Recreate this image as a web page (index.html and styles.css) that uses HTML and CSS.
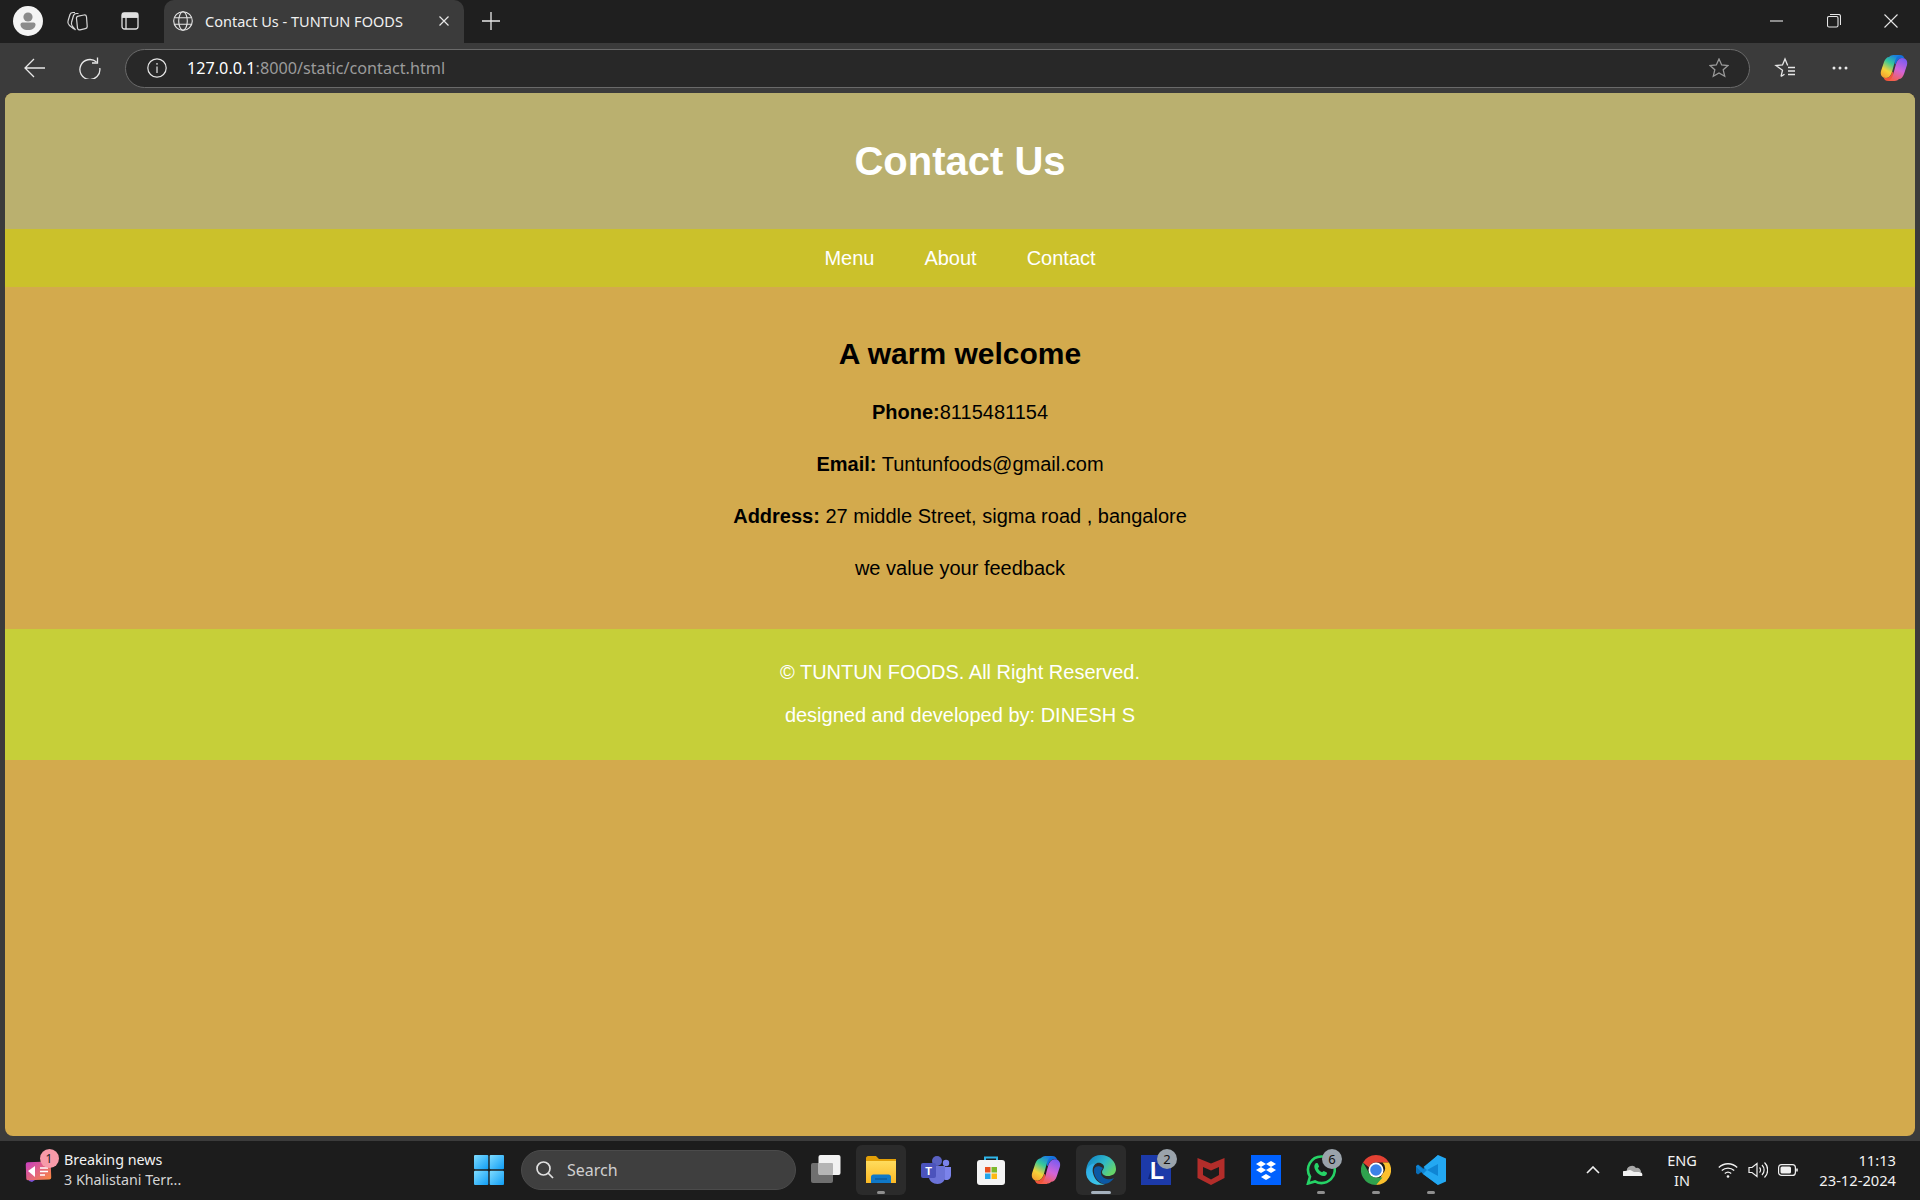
FILE: index.html
```html
<!DOCTYPE html>
<html lang="en">
<head>
<meta charset="utf-8">
<title>Contact Us - TUNTUN FOODS</title>
<link rel="stylesheet" href="styles.css">
</head>
<body>
<svg class="defs" aria-hidden="true">
  <defs>
    <linearGradient id="win" x1="0" y1="0" x2="1" y2="1"><stop offset="0" stop-color="#7fdcff"/><stop offset="1" stop-color="#0f9df5"/></linearGradient>
    <linearGradient id="copA" x1="0.7" y1="0" x2="0.2" y2="1"><stop offset="0" stop-color="#1b7fe0"/><stop offset=".35" stop-color="#35c99a"/><stop offset=".7" stop-color="#f5d33a"/><stop offset="1" stop-color="#f5a02e"/></linearGradient>
    <linearGradient id="copB" x1="0.7" y1="0" x2="0.3" y2="1"><stop offset="0" stop-color="#7b5cf0"/><stop offset=".5" stop-color="#d264d8"/><stop offset="1" stop-color="#f5604a"/></linearGradient>
    <linearGradient id="edgeA" x1="0" y1="0" x2="1" y2="0.6"><stop offset="0" stop-color="#0c7bc8"/><stop offset=".6" stop-color="#2fb8c8"/><stop offset="1" stop-color="#66d46a"/></linearGradient>
    <linearGradient id="edgeB" x1="0" y1="0" x2="0.6" y2="1"><stop offset="0" stop-color="#2aa4e6"/><stop offset="1" stop-color="#3cc7e8"/></linearGradient>
    <linearGradient id="folder" x1="0" y1="0" x2="0" y2="1"><stop offset="0" stop-color="#ffdc5e"/><stop offset="1" stop-color="#fcb924"/></linearGradient>
    <linearGradient id="news" x1="0" y1="0" x2="1" y2="1"><stop offset="0" stop-color="#c93ec2"/><stop offset="1" stop-color="#fb8a3c"/></linearGradient>
    <symbol id="copilot" viewBox="0 0 28 28">
      <path fill="#1670dc" d="M13 1h7c2.500 0 4 1.500 4.500 4-1-1-2-1-3-1-2.500 0-4.500 2.500-5.500 5.500l-1 1z"/>
      <path fill="#f0553a" d="M15 27H8c-2.500 0-4-1.500-4.500-4 1 1 2 1 3 1 2.500 0 4.500-2.500 5.500-5.500l1-1z"/>
      <path fill="url(#copA)" d="M9 3c2-2 4-2 6-2h5c-3 1-4 3-5 6l-3 11c-1 3-3 6-6 6-4 0-6-3-5-7l3-9c1-3 3-5 5-5z"/>
      <path fill="url(#copB)" d="M19 25c-2 2-4 2-6 2H8c3-1 4-3 5-6l3-11c1-3 3-6 6-6 4 0 6 3 5 7l-3 9c-1 3-3 5-5 5z"/>
    </symbol>
  </defs>
</svg>

<div class="screen">
  <div class="tabstrip">
    <div class="strip-btn first">
      <svg class="i30" viewBox="0 0 30 30"><circle cx="15" cy="15" r="15" fill="#f4f4f4"/><circle cx="15" cy="11" r="4.6" fill="#8b8b8b"/><path fill="#8b8b8b" d="M7.500 18.500c0-1.200 1-2 2-2h11c1 0 2 .8 2 2 0 3.500-3 5.500-7.500 5.500S7.500 22 7.500 18.500z"/></svg>
    </div>
    <div class="strip-btn">
      <svg class="i22" viewBox="0 0 22 22" fill="none" stroke="#d8d8d8" stroke-width="1.200"><path d="M8 19 3.500 15.500C2 14 1.500 12.500 2 11L4 4.500C4.500 3 5.500 2.500 7 2.500l2 0"/><path d="M9.500 20 6.500 16.500C5.500 15 5 14 5.500 12.500L7.500 5.500C8 4 9 3.500 10.500 3.500h2"/><path d="M10.500 8.500c-.2-1.200.6-2.200 1.800-2.400L18 5c1.200-.2 2.300.6 2.500 1.800l.7 9.500c.1 1.200-.7 2.200-1.900 2.400l-5.300 1.200c-1.200.2-2.300-.6-2.500-1.800z"/></svg>
    </div>
    <div class="strip-btn panel">
      <svg class="i20" viewBox="0 0 20 20" fill="none" stroke="#e0e0e0" stroke-width="1.300"><rect x="2" y="2" width="16" height="16" rx="2.500"/><path d="M6 6v12M2 6h16"/><path d="M2.500 2.500h15v3.500h-15z" fill="#e0e0e0"/></svg>
    </div>
    <div class="tab">
      <svg class="i20" viewBox="0 0 20 20" fill="none" stroke="#e6e6e6" stroke-width="1.100"><circle cx="10" cy="10" r="9.300"/><ellipse cx="10" cy="10" rx="4.300" ry="9.300"/><path d="M1.500 6.800h17M1.500 13.200h17"/></svg>
      <span class="tab-title">Contact Us - TUNTUN FOODS</span>
      <svg class="i10 tab-close" viewBox="0 0 10 10" fill="none" stroke="#e8e8e8" stroke-width="1.200"><path d="M.5.500l9 9M9.500.500l-9 9"/></svg>
    </div>
    <div class="strip-btn plus">
      <svg class="i18" viewBox="0 0 18 18" fill="none" stroke="#e8e8e8" stroke-width="1.300"><path d="M9 0v18M0 9h18"/></svg>
    </div>
    <div class="strip-space"></div>
    <div class="winctl"><svg class="i14" viewBox="0 0 14 14" fill="none" stroke="#e6e6e6" stroke-width="1.100"><path d="M0 7h13"/></svg></div>
    <div class="winctl"><svg class="i14" viewBox="0 0 14 14" fill="none" stroke="#e6e6e6" stroke-width="1.100"><rect x=".5" y="2.500" width="10.500" height="10.500" rx="1.500"/><path d="M3 .5h8.500c1 0 2 1 2 2V11"/></svg></div>
    <div class="winctl"><svg class="i14" viewBox="0 0 14 14" fill="none" stroke="#e6e6e6" stroke-width="1.100"><path d="M.5.500l13 13M13.500.500l-13 13"/></svg></div>
  </div>

  <div class="toolbar">
    <div class="tool-btn lead">
      <svg class="i22" viewBox="0 0 22 22" fill="none" stroke="#e8e8e8" stroke-width="1.300"><path d="M21 11H1M10 2l-9 9 9 9"/></svg>
    </div>
    <div class="tool-btn">
      <svg class="i22" viewBox="0 0 22 22" fill="none" stroke="#e8e8e8" stroke-width="1.300"><path d="M17.500 5A10 10 0 1 0 20.800 11"/><path d="M18.500 .5v5.500h-5.500"/></svg>
    </div>
    <div class="address">
      <svg class="i20" viewBox="0 0 20 20" fill="none" stroke="#e6e6e6" stroke-width="1.200"><circle cx="10" cy="10" r="9.200"/><path d="M10 8.500v6.500M10 5v1.800"/></svg>
      <span class="url"><span class="host">127.0.0.1</span>:8000/static/contact.html</span>
      <svg class="i20 addr-star" viewBox="0 0 20 20" fill="none" stroke="#9a9a9a" stroke-width="1.300"><path d="M10 1l2.700 6 6.300.6-4.800 4.200 1.500 6.400L10 14.900l-5.700 3.300 1.500-6.400L1 7.600 7.300 7z"/></svg>
    </div>
    <div class="tool-btn">
      <svg class="i22" viewBox="0 0 22 22" fill="none" stroke="#e8e8e8" stroke-width="1.300"><path d="M7 19.500l1.500-6.200L2 8.500l6.500-.6L11 2l2.700 6.500M7 19.500l3.500-2.200"/><path d="M14 10.500h7M14 14h7M14 17.500h7"/></svg>
    </div>
    <div class="tool-btn">
      <svg class="dots" viewBox="0 0 16 4" fill="#e8e8e8"><circle cx="2" cy="2" r="1.500"/><circle cx="8" cy="2" r="1.500"/><circle cx="14" cy="2" r="1.500"/></svg>
    </div>
    <div class="tool-btn last">
      <svg class="i28" viewBox="0 0 28 28"><use href="#copilot"/></svg>
    </div>
  </div>

  <div class="frame">
    <div class="page">
      <header class="site-header"><h1>Contact Us</h1></header>
      <nav class="site-nav">
        <a>Menu</a>
        <a>About</a>
        <a>Contact</a>
      </nav>
      <main class="site-main">
        <h2>A warm welcome</h2>
        <p><strong>Phone:</strong>8115481154</p>
        <p><strong>Email:</strong> Tuntunfoods@gmail.com</p>
        <p><strong>Address:</strong> 27 middle Street, sigma road , bangalore</p>
        <p>we value your feedback</p>
      </main>
      <footer class="site-footer">
        <p>© TUNTUN FOODS. All Right Reserved.</p>
        <p>designed and developed by: DINESH S</p>
      </footer>
    </div>
  </div>

  <div class="taskbar">
    <div class="news">
      <div class="news-icon">
        <svg class="i30" viewBox="0 0 30 30"><path fill="#3f6fd8" d="M7 13 22 5l2 8-15 8z"/><path fill="#7a4fe0" d="M3 15l18 3-12 8-3-1z"/><rect x="3" y="6" width="25" height="18" rx="2" fill="url(#news)" transform="rotate(-2 15 15)"/><path fill="#fff" d="M5 15l7-5v11z"/><path stroke="#fff" stroke-width="1.500" d="M17 12h8M17 15.500h8M17 19h5"/></svg>
        <span class="news-badge">1</span>
      </div>
      <div class="news-text"><span class="news-title">Breaking news</span><span class="news-sub">3 Khalistani Terr...</span></div>
    </div>

    <div class="apps">
      <div class="app start">
        <svg class="i30" viewBox="0 0 30 30" fill="url(#win)"><rect x="0" y="0" width="14.300" height="14.300" rx="1"/><rect x="15.700" y="0" width="14.300" height="14.300" rx="1"/><rect x="0" y="15.700" width="14.300" height="14.300" rx="1"/><rect x="15.700" y="15.700" width="14.300" height="14.300" rx="1"/></svg>
      </div>
      <div class="search">
        <svg class="i18" viewBox="0 0 18 18" fill="none" stroke="#e0e0e0" stroke-width="1.700"><circle cx="7.500" cy="7.500" r="6.500"/><path d="M12 12l5 5"/></svg>
        <span>Search</span>
      </div>
      <div class="app">
        <svg class="i30" viewBox="0 0 30 30"><rect x="0" y="8" width="22" height="20" rx="2" fill="#6f6f6f"/><rect x="7.500" y="0" width="22" height="20" rx="2" fill="#f2f2f2"/><rect x="7.500" y="8" width="14.500" height="12" rx="1" fill="#b5b5b5"/></svg>
      </div>
      <div class="app active">
        <svg class="i30" viewBox="0 0 30 30"><path fill="#e3a008" d="M0 3c0-1 1-2 2-2h8l3 3h17v6H0z"/><path fill="url(#folder)" d="M0 6h30v22H0z"/><path fill="#0f78c8" d="M5 22c0-1.500 1-2.500 2.500-2.500h15c1.500 0 2.500 1 2.500 2.500v6H5z"/><path stroke="#0a4f8a" stroke-width="1" d="M9 24h12"/></svg>
        <i class="pin"></i>
      </div>
      <div class="app">
        <svg class="i30" viewBox="0 0 30 30"><circle cx="16" cy="6" r="5" fill="#5a62c2"/><circle cx="25" cy="8" r="3.200" fill="#7b83eb"/><path fill="#7b83eb" d="M21 12h9v8c0 3-2 5-4.500 5S21 23 21 20z"/><path fill="#6b73d8" d="M8 11h16v11c0 4-3 7-7.500 7S8 26 8 22z"/><rect x="0" y="8" width="15" height="15" rx="2" fill="#4b53bc"/><text class="t-t" x="7.500" y="20" text-anchor="middle">T</text></svg>
      </div>
      <div class="app">
        <svg class="i30" viewBox="0 0 30 30"><path fill="none" stroke="#2fb6e9" stroke-width="2" d="M9 6V2.500h12V6"/><rect x="1" y="5" width="28" height="25" rx="3" fill="#f4f4f4"/><rect x="9" y="12" width="5.500" height="5.500" fill="#e8501f"/><rect x="15.500" y="12" width="5.500" height="5.500" fill="#7cb82a"/><rect x="9" y="18.500" width="5.500" height="5.500" fill="#22a5ea"/><rect x="15.500" y="18.500" width="5.500" height="5.500" fill="#fdb812"/></svg>
      </div>
      <div class="app">
        <svg class="i30" viewBox="0 0 28 28"><use href="#copilot"/></svg>
      </div>
      <div class="app active">
        <svg class="i30" viewBox="0 0 30 30"><path fill="url(#edgeA)" d="M15 0c9 0 15 7 15 14 0 5-4 7-8 7s-6-2-6-4 2-3 2-5c0-3-4-5-7-4C5 9 1 13 0 18 0 7 6 0 15 0z"/><path fill="url(#edgeB)" d="M0 17c1-6 6-9 11-9-4 2-5 6-4 10 1 6 7 12 12 11C10 32 0 27 0 17z"/><path fill="#0c59a4" d="M8 14c-1 6 3 13 10 15 4 0 8-3 10-6-4 2-9 2-12-2-2-3-1-6 1-8-4-3-8-2-9 1z"/></svg>
        <i class="pin wide"></i>
      </div>
      <div class="app">
        <svg class="i30" viewBox="0 0 30 30"><rect width="30" height="30" fill="#1c3aa9"/><path fill="#0f2579" d="M12 8h4l-5 16H7z"/><text class="t-l" x="16" y="24" text-anchor="middle">L</text></svg>
        <span class="app-badge">2</span>
      </div>
      <div class="app">
        <svg class="i30" viewBox="0 0 30 30"><path fill="#b32d2a" d="M1.500 3 15 8.500 28.500 3v20L15 30 1.500 23z"/><path fill="#1c1c1c" d="M7 12l8 3.500 8-3.500v8l-8 4.500L7 20z"/></svg>
      </div>
      <div class="app">
        <svg class="i30" viewBox="0 0 30 30"><rect width="30" height="30" fill="#0061fe"/><g fill="#fff"><path d="M10 6l5 3-5 3-5-3z"/><path d="M20 6l5 3-5 3-5-3z"/><path d="M10 12l5 3-5 3-5-3z"/><path d="M20 12l5 3-5 3-5-3z"/><path d="M15 19l5 3-5 3-5-3z"/></g></svg>
      </div>
      <div class="app">
        <svg class="i30" viewBox="0 0 30 30"><path fill="none" stroke="#25d366" stroke-width="2.600" d="M15.500 1.500a13.300 13.300 0 0 1 0 26.600c-2.300 0-4.500-.6-6.500-1.700L2 28.500l2-6.800A13.300 13.300 0 0 1 15.500 1.500z"/><path fill="#25d366" d="M10.500 8c1 0 1.300.3 1.600 1l1 2.500-1.200 1.800c.8 1.800 2.300 3.200 4.100 4l1.700-1.400 2.700 1.300c.6.300.7.800.5 1.500-.5 1.500-1.700 2.300-3.300 2.300-4.800-.6-8.800-4.700-9.300-9.300 0-1.800 1-3.700 2.200-3.700z"/></svg>
        <span class="app-badge">6</span>
        <i class="pin"></i>
      </div>
      <div class="app">
        <svg class="i30" viewBox="0 0 30 30"><path fill="#e34133" d="M15 0a15 15 0 0 1 13 7.500H15a7.500 7.500 0 0 0-7 5L2 7.500A15 15 0 0 1 15 0z"/><path fill="#fbc02d" d="M28 7.500A15 15 0 0 1 15 30l6.500-11A7.500 7.500 0 0 0 21.500 7.500z"/><path fill="#2fa24e" d="M2 7.500l6.500 11.300A7.500 7.500 0 0 0 15 22.500h6.500L15 30A15 15 0 0 1 2 7.500z"/><circle cx="15" cy="15" r="7.500" fill="#fff"/><circle cx="15" cy="15" r="5.800" fill="#3b82e8"/></svg>
        <i class="pin"></i>
      </div>
      <div class="app">
        <svg class="i30" viewBox="0 0 30 30"><path fill="#0a6fb8" d="M0 11l2-1.500 7 5-7 5L0 18z"/><path fill="#0f85d4" d="M22 0 7 14.500 2 10 0 11.500 7 19l.1.100L22 30z"/><path fill="#23a8f2" d="M22 0l8 3.500v23L22 30V9l-11 6-3.500-3z"/><path fill="#23a8f2" d="M22 21v9L7 19l4-4z"/></svg>
        <i class="pin"></i>
      </div>
    </div>

    <div class="tray">
      <div class="tray-cell wide">
        <svg class="chev" viewBox="0 0 14 8" fill="none" stroke="#f0f0f0" stroke-width="1.600"><path d="M1 7l6-6 6 6"/></svg>
      </div>
      <div class="tray-cell wide">
        <svg class="cloud" viewBox="0 0 20 12"><path fill="#a8a8a8" d="M4 8a5 5 0 0 1 9-4 4 4 0 0 1 5 4z"/><path fill="#f2f2f2" d="M1 12a2.500 2.500 0 0 1 1-5c2 0 3-1 5-1 2 .5 2.500 1.500 4 2h5c3 0 4 2.500 3 4z"/></svg>
      </div>
      <div class="lang"><span>ENG</span><span>IN</span></div>
      <div class="tray-cell">
        <svg class="i20" viewBox="0 0 20 20" fill="none" stroke="#f0f0f0" stroke-width="1.300"><path d="M.8 7.500c5-5 13.400-5 18.400 0M3.800 10.500c3.500-3.300 8.900-3.300 12.400 0M6.800 13.500c1.800-1.600 4.600-1.600 6.400 0"/><circle cx="10" cy="16.500" r="1.300" fill="#f0f0f0" stroke="none"/></svg>
      </div>
      <div class="tray-cell">
        <svg class="i20" viewBox="0 0 20 20" fill="none" stroke="#f0f0f0" stroke-width="1.200"><path d="M1 7.500h3L9 3.500v13l-5-4H1z"/><path d="M11.500 7.500a3.500 3.500 0 0 1 0 5M14 5a7 7 0 0 1 0 10M16.500 2.500a10.500 10.500 0 0 1 0 15"/></svg>
      </div>
      <div class="tray-cell">
        <svg class="i20" viewBox="0 0 20 20" fill="none" stroke="#f0f0f0" stroke-width="1.200"><rect x=".6" y="4.600" width="16.800" height="10.800" rx="3"/><rect x="2.500" y="6.500" width="10.500" height="7" rx="1.500" fill="#f0f0f0" stroke="none"/><path d="M19 8.500v3" stroke-width="1.600"/></svg>
      </div>
      <div class="clock"><span>11:13</span><span>23-12-2024</span></div>
    </div>
  </div>
</div>
</body>
</html>
```

FILE: styles.css
```css
* { box-sizing: border-box; }
html, body { margin: 0; height: 100%; }
body { overflow: hidden; background: #1c1c1c; font-family: "Noto Sans", "Open Sans", sans-serif; }
.defs { position: absolute; width: 0; height: 0; }
.screen { height: 1200px; display: flex; flex-direction: column; }

.i10 { width: 10px; height: 10px; }
.i14 { width: 14px; height: 14px; }
.i18 { width: 18px; height: 18px; }
.i20 { width: 20px; height: 20px; }
.i22 { width: 22px; height: 22px; }
.i28 { width: 28px; height: 28px; }
.i30 { width: 30px; height: 30px; }
svg { display: block; flex: none; }

/* tab strip */
.tabstrip { height: 43px; background: #1f1f1f; display: flex; align-items: stretch; }
.strip-btn { width: 42px; display: flex; align-items: center; justify-content: center; padding-bottom: 2px; }
.strip-btn.first { width: 56px; }
.strip-btn.panel { margin-left: 11px; }
.strip-btn.plus { width: 54px; }
.tab { width: 300px; margin-left: 13px; background: #3b3b3b; border-radius: 10px 10px 0 0; display: flex; align-items: center; padding: 0 15px 2px 9px; color: #f0f0f0; }
.tab-title { margin-left: 12px; font-size: 14.500px; white-space: nowrap; flex: 1; }
.strip-space { flex: 1; }
.winctl { width: 57.300px; display: flex; align-items: center; justify-content: center; padding-bottom: 1px; }

/* toolbar */
.toolbar { height: 50px; background: #3b3b3b; display: flex; align-items: center; }
.tool-btn { width: 55px; height: 39px; display: flex; align-items: center; justify-content: center; }
.tool-btn.lead { margin-left: 7px; }
.tool-btn.last { width: 53px; }
.dots { width: 16px; height: 4px; }
.address { flex: 1; height: 39px; margin: 0 7px 0 8px; background: #282828; border: 1px solid #6a6a6a; border-radius: 20px; display: flex; align-items: center; padding: 0 20px 0 21px; }
.url { margin-left: 20px; font-size: 16.200px; color: #9b9b9b; white-space: nowrap; flex: 1; }
.host { color: #fff; }

/* browser viewport */
.frame { flex: 1; min-height: 0; background: #3b3b3b; padding: 0 5px 5px; }
.page { height: 100%; border-radius: 8px; overflow: hidden; background: #d3aa4d; font-family: "Liberation Sans", Arial, sans-serif; color: #000; font-size: 20px; text-align: center; }
.site-header { background: #bab06f; color: #fff; padding: 45px 0; }
.site-header h1 { margin: 0; font-size: 40px; line-height: 46px; }
.site-nav { background: #cbc12b; display: flex; justify-content: center; gap: 50px; padding: 18px 0 17px; line-height: 23px; }
.site-nav a { color: #fff; }
.site-main { padding: 47px 0 45px; }
.site-main h2 { margin: 0 0 22px; font-size: 30px; line-height: 40px; }
.site-main p { margin: 20px 0 0; line-height: 32px; }
.site-main h2 + p { margin-top: 0; }
.site-footer { background: #c6cf39; color: #fff; padding: 32px 0 33px; line-height: 23px; }
.site-footer p { margin: 0; }
.site-footer p + p { margin-top: 20px; }

/* taskbar */
.taskbar { height: 59px; background: #1c1c1c; display: flex; color: #f2f2f2; position: relative; }
.news { width: 464px; display: flex; padding: 9px 0 0 23px; }
.news-icon { position: relative; width: 30px; height: 30px; margin-top: 6px; }
.news-badge { position: absolute; left: 16.500px; top: -7px; width: 19px; height: 19px; border-radius: 50%; background: #f79aa9; color: #222; font-size: 12px; line-height: 19px; text-align: center; }
.news-text { margin-left: 11px; display: flex; flex-direction: column; font-size: 14.300px; line-height: 20px; }
.news-sub { color: #d4d4d4; }

.apps { display: flex; align-items: flex-start; padding-top: 4px; gap: 5px; }
.app { position: relative; width: 50px; height: 50px; display: flex; align-items: center; justify-content: center; border-radius: 6px; }
.app.start { margin-right: 2px; }
.app.active { background: #2b2b2b; }
.pin { position: absolute; left: 21px; bottom: 1px; width: 8px; height: 3px; border-radius: 2px; background: #8f8f8f; }
.pin.wide { left: 15px; width: 20px; background: #a5b1bd; }
.app-badge { position: absolute; left: 26px; top: 4px; width: 20px; height: 20px; border-radius: 50%; background: #9aa3ab; color: #111; font-size: 13px; line-height: 20px; text-align: center; }
.t-t { font: bold 11px "Liberation Sans", sans-serif; fill: #fff; }
.t-l { font: bold 23px "Liberation Sans", sans-serif; fill: #fff; }
.search { width: 275px; height: 40px; margin: 5px 0 0; background: #3f3f3f; border: 1px solid #4b4b4b; border-radius: 20px; display: flex; align-items: center; padding-left: 14px; font-size: 16px; color: #cfcfcf; gap: 13px; }

.tray { margin-left: auto; display: flex; align-items: center; padding: 0 24px 2px 0; }
.tray-cell { width: 30px; display: flex; justify-content: center; }
.tray-cell.wide { width: 40px; }
.chev { width: 14px; height: 8px; }
.cloud { width: 20px; height: 12px; }
.lang { width: 58px; margin-right: 2px; display: flex; flex-direction: column; align-items: center; font-size: 14.500px; line-height: 20px; }
.clock { width: 93px; display: flex; flex-direction: column; align-items: flex-end; font-size: 14.700px; line-height: 20px; }
```
